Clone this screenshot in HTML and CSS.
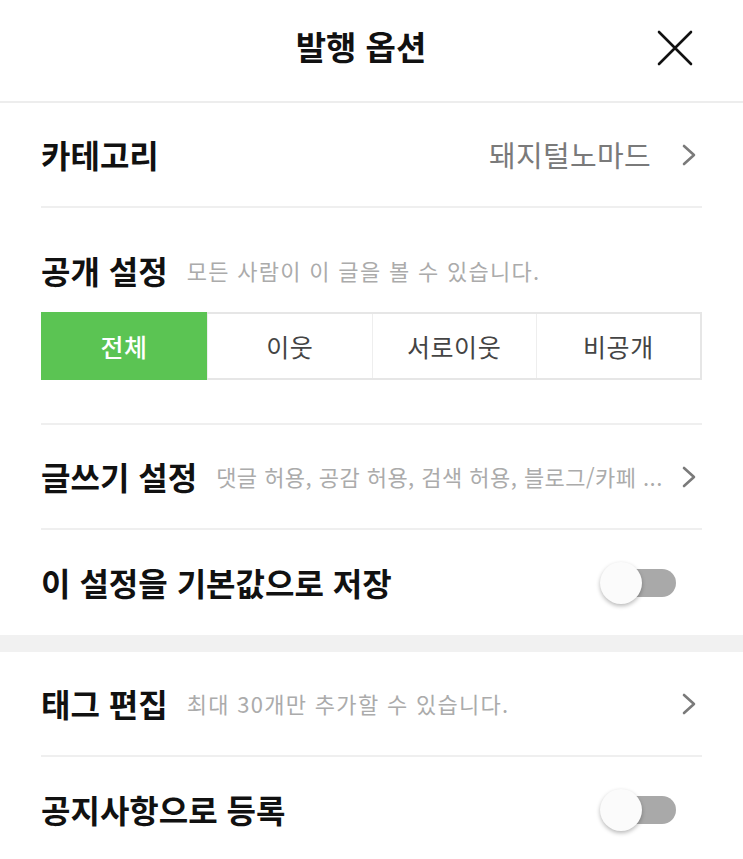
FILE: index.html
```html
<!DOCTYPE html>
<html lang="ko">
<head>
<meta charset="utf-8">
<title>발행 옵션</title>
<link rel="stylesheet" href="styles.css">
</head>
<body>
<div class="sheet">
  <header class="header">
    <h1 class="title">발행 옵션</h1>
    <button class="close" aria-label="닫기">
      <svg width="36" height="36" viewBox="0 0 36 36"><path d="M2 2L34 34M34 2L2 34" stroke="#111" stroke-width="2.6" stroke-linecap="round" fill="none"/></svg>
    </button>
  </header>

  <div class="group">
    <div class="row">
      <span class="label">카테고리</span>
      <span class="value">돼지털노마드</span>
      <svg class="chev" width="14" height="22" viewBox="0 0 14 22"><path d="M2 2L12 11L2 20" stroke="#7a7a7a" stroke-width="2.6" fill="none" stroke-linecap="round" stroke-linejoin="round"/></svg>
    </div>

    <div class="section">
      <div class="section-head">
        <span class="label">공개 설정</span>
        <span class="hint">모든 사람이 이 글을 볼 수 있습니다.</span>
      </div>
      <div class="segments">
        <div class="seg active">전체</div>
        <div class="seg">이웃</div>
        <div class="seg">서로이웃</div>
        <div class="seg">비공개</div>
      </div>
    </div>

    <div class="row">
      <span class="label">글쓰기 설정</span>
      <span class="hint tight">댓글 허용, 공감 허용, 검색 허용, 블로그/카페 ...</span>
      <svg class="chev push" width="14" height="22" viewBox="0 0 14 22"><path d="M2 2L12 11L2 20" stroke="#7a7a7a" stroke-width="2.6" fill="none" stroke-linecap="round" stroke-linejoin="round"/></svg>
    </div>

    <div class="row last">
      <span class="label grow">이 설정을 기본값으로 저장</span>
      <span class="toggle"><span class="thumb"></span></span>
    </div>
  </div>

  <div class="band"></div>

  <div class="group">
    <div class="row">
      <span class="label">태그 편집</span>
      <span class="hint">최대 30개만 추가할 수 있습니다.</span>
      <svg class="chev push" width="14" height="22" viewBox="0 0 14 22"><path d="M2 2L12 11L2 20" stroke="#7a7a7a" stroke-width="2.6" fill="none" stroke-linecap="round" stroke-linejoin="round"/></svg>
    </div>
    <div class="row last">
      <span class="label grow">공지사항으로 등록</span>
      <span class="toggle"><span class="thumb"></span></span>
    </div>
  </div>
</div>
</body>
</html>
```
FILE: styles.css
```css
* { box-sizing: border-box; }
html, body {
  margin: 0;
  padding: 0;
  background: #fff;
}
body {
  font-family: "Noto Sans CJK KR", "Noto Sans", sans-serif;
  color: #111;
  width: 743px;
  height: 859px;
  overflow: hidden;
}
.header {
  height: 103px;
  border-bottom: 2px solid #ededed;
  display: flex;
  align-items: center;
  justify-content: center;
  position: relative;
}
.title {
  margin: -8px 0 0 -21px;
  font-size: 33px;
  font-weight: 700;
  line-height: 1.2;
}
.close {
  position: absolute;
  right: 50px;
  top: 30px;
  width: 36px;
  height: 36px;
  padding: 0;
  border: 0;
  background: none;
  display: flex;
}
.group {
  padding: 0 41px;
}
.row {
  height: 105px;
  display: flex;
  align-items: center;
  border-bottom: 2px solid #efefef;
  gap: 19px;
}
.row.last {
  border-bottom: 0;
}
.label {
  font-size: 32px;
  font-weight: 700;
  white-space: nowrap;
  line-height: 1.2;
}
.grow {
  flex: 1;
  min-width: 0;
}
.value {
  margin-left: auto;
  font-size: 29px;
  color: #7a7a7a;
  letter-spacing: 0.3px;
  margin-right: 12px;
  line-height: 1.2;
}
.chev {
  flex: none;
  margin-right: 6px;
}
.chev.push {
  margin-left: auto;
}
.hint {
  font-size: 22px;
  color: #ababab;
  white-space: nowrap;
  letter-spacing: 1.3px;
  line-height: 1.3;
  flex: none;
}
.hint.tight {
  letter-spacing: 0.45px;
}
.section {
  padding: 40px 0 43px;
  border-bottom: 2px solid #efefef;
}
.section-head {
  display: flex;
  align-items: center;
  gap: 19px;
  height: 44px;
}
.segments {
  margin-top: 20px;
  display: grid;
  grid-template-columns: repeat(4, 1fr);
  height: 68px;
  border: 2px solid #e6e6e6;
}
.seg {
  display: flex;
  align-items: center;
  justify-content: center;
  font-size: 25px;
  letter-spacing: 0.6px;
  color: #444;
  border-left: 1px solid #eeeeee;
}
.seg:first-child { border-left: 0; }
.seg.active {
  background: #5bc453;
  color: #fff;
  font-weight: 500;
  margin: -2px 0 -2px -2px;
}
.toggle {
  position: relative;
  width: 65px;
  height: 28px;
  border-radius: 14px;
  background: #a9a9a9;
  margin-right: 26px;
  flex: none;
}
.thumb {
  position: absolute;
  left: -11px;
  top: -7px;
  width: 42px;
  height: 42px;
  border-radius: 50%;
  background: #fbfbfb;
  box-shadow: 0 2px 4px rgba(0,0,0,0.28);
}
.band {
  height: 17px;
  background: #f1f1f1;
}
```
